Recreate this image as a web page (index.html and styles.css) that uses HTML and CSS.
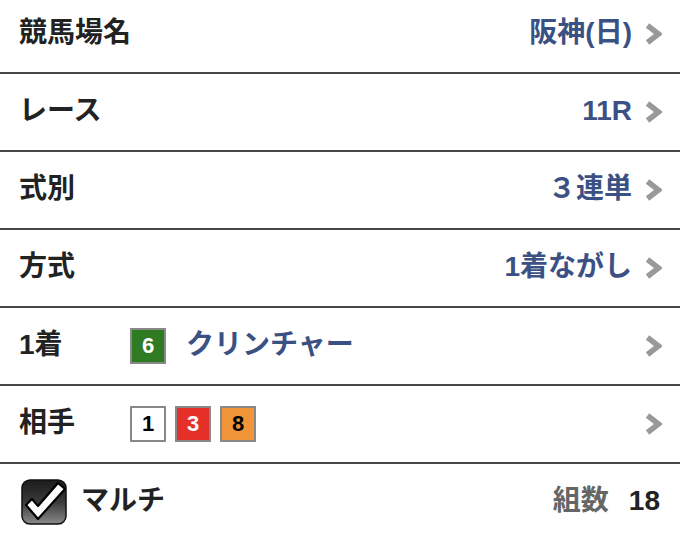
FILE: index.html
```html
<!DOCTYPE html>
<html lang="ja">
<head>
<meta charset="utf-8">
<link rel="stylesheet" href="styles.css">
</head>
<body>
<div class="list">
  <div class="row">
    <span class="label">競馬場名</span>
    <span class="value">阪神(日)</span>
    <svg class="chev" viewBox="0 0 17 22"><polyline points="2.5,2.5 13.5,11 2.5,19.5"/></svg>
  </div>
  <div class="row">
    <span class="label">レース</span>
    <span class="value">11R</span>
    <svg class="chev" viewBox="0 0 17 22"><polyline points="2.5,2.5 13.5,11 2.5,19.5"/></svg>
  </div>
  <div class="row">
    <span class="label">式別</span>
    <span class="value">３連単</span>
    <svg class="chev" viewBox="0 0 17 22"><polyline points="2.5,2.5 13.5,11 2.5,19.5"/></svg>
  </div>
  <div class="row">
    <span class="label">方式</span>
    <span class="value">1着ながし</span>
    <svg class="chev" viewBox="0 0 17 22"><polyline points="2.5,2.5 13.5,11 2.5,19.5"/></svg>
  </div>
  <div class="row">
    <span class="label label-fixed">1着</span>
    <span class="badge badge-green">6</span>
    <span class="horse">クリンチャー</span>
    <span class="spacer"></span>
    <svg class="chev" viewBox="0 0 17 22"><polyline points="2.5,2.5 13.5,11 2.5,19.5"/></svg>
  </div>
  <div class="row">
    <span class="label label-fixed">相手</span>
    <div class="badges">
      <span class="badge badge-white">1</span>
      <span class="badge badge-red">3</span>
      <span class="badge badge-orange">8</span>
    </div>
    <span class="spacer"></span>
    <svg class="chev" viewBox="0 0 17 22"><polyline points="2.5,2.5 13.5,11 2.5,19.5"/></svg>
  </div>
  <div class="row row-last">
    <svg class="check" viewBox="0 0 46 46">
      <defs>
        <linearGradient id="cbg" x1="0" y1="0" x2="0" y2="1">
          <stop offset="0" stop-color="#1c1c1c"/>
          <stop offset="0.5" stop-color="#3a3a3a"/>
          <stop offset="1" stop-color="#8a8a8a"/>
        </linearGradient>
      </defs>
      <rect x="1" y="1" width="44" height="44" rx="8" ry="8" fill="url(#cbg)" stroke="#111" stroke-width="1.5"/>
      <path d="M5 26 L11 20 L17 27 L37 4 L44 10 L17 40 Z" fill="#fff" stroke="#000" stroke-width="2.2" stroke-linejoin="round"/>
    </svg>
    <span class="multi">マルチ</span>
    <span class="spacer"></span>
    <span class="count-label">組数</span>
    <span class="count">18</span>
  </div>
</div>
</body>
</html>
```
FILE: styles.css
```css
html, body {
  margin: 0;
  padding: 0;
  background: #fff;
}
body {
  font-family: "Liberation Sans", "Noto Sans CJK JP", sans-serif;
  font-weight: bold;
  color: #222;
  width: 680px;
  height: 533px;
  overflow: hidden;
}
.list {
  margin-top: -4px;
}
.row {
  display: flex;
  align-items: center;
  height: 76px;
  border-bottom: 2px solid #474747;
  padding: 0 18px 0 19px;
  font-size: 28px;
  line-height: 1;
}
.label {
  color: #222;
  padding-bottom: 2px;
}
.label-fixed {
  width: 111px;
  flex: none;
}
.value {
  margin-left: auto;
  color: #3b5183;
  padding-bottom: 2px;
}
.chev {
  width: 17px;
  height: 22px;
  margin-left: 13px;
  flex: none;
}
.chev polyline {
  fill: none;
  stroke: #999;
  stroke-width: 5.5;
  stroke-linejoin: miter;
  stroke-linecap: butt;
}
.spacer {
  flex: 1;
}
.badges {
  display: flex;
  gap: 9px;
}
.badge {
  width: 36px;
  height: 36px;
  box-sizing: border-box;
  border: 2px solid #888;
  display: flex;
  align-items: center;
  justify-content: center;
  font-family: "Liberation Sans", sans-serif;
  font-size: 22px;
  font-weight: bold;
  flex: none;
}
.badge-green { background: #2e7b22; color: #fff; }
.badge-white { background: #fff; color: #000; }
.badge-red { background: #e5302a; color: #fff; }
.badge-orange { background: #ef9437; color: #000; }
.horse {
  margin-left: 20px;
  color: #3b5183;
  padding-bottom: 2px;
}
.row-last {
  border-bottom: none;
}
.check {
  width: 46px;
  height: 46px;
  margin-left: 2px;
  flex: none;
}
.multi {
  margin-left: 14px;
  color: #222;
  padding-bottom: 2px;
}
.count-label {
  color: #666;
  padding-bottom: 2px;
}
.count {
  margin-left: 20px;
  margin-right: 2px;
  color: #222;
  padding-bottom: 2px;
}
```
